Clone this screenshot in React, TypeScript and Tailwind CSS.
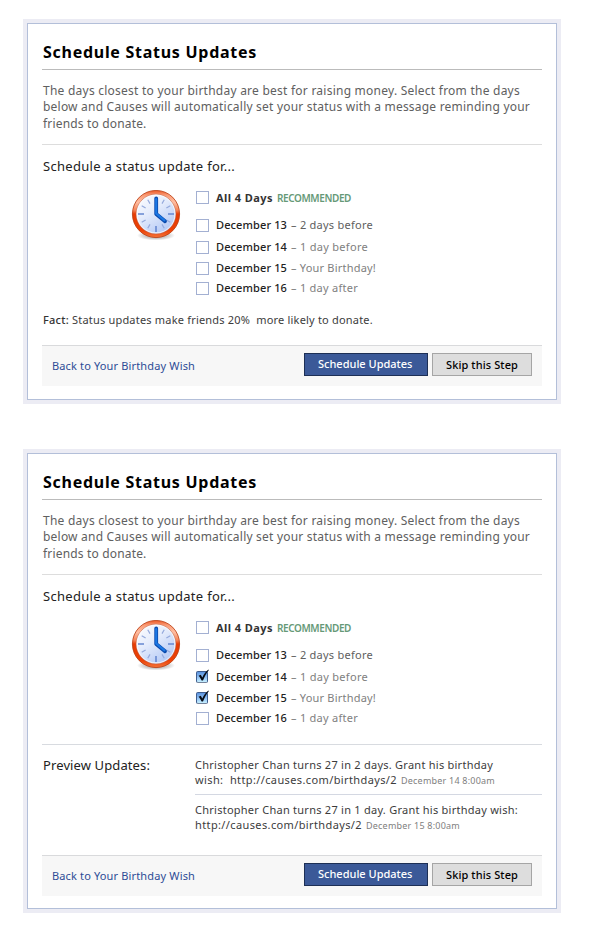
import type { ReactNode } from "react";

function Clock({ id }: { id: string }) {
  const ticks = [30, 60, 120, 150, 210, 240, 300, 330];
  return (
    <svg className="block h-[54px] w-[52px]" viewBox="0 0 52 54">
      <defs>
        <linearGradient id={`${id}-rim`} x1="0" y1="0" x2="0" y2="1">
          <stop offset="0" stopColor="#ec5a28" />
          <stop offset="0.1" stopColor="#fb9a74" />
          <stop offset="0.25" stopColor="#ffbea2" />
          <stop offset="0.42" stopColor="#f58458" />
          <stop offset="0.5" stopColor="#e63c04" />
          <stop offset="0.85" stopColor="#ec4206" />
          <stop offset="1" stopColor="#f4753c" />
        </linearGradient>
        <linearGradient id={`${id}-face`} x1="0" y1="0" x2="0.7" y2="1">
          <stop offset="0" stopColor="#ffffff" />
          <stop offset="0.45" stopColor="#e6edfc" />
          <stop offset="1" stopColor="#b3c8f5" />
        </linearGradient>
        <radialGradient id={`${id}-shadow`}>
          <stop offset="0" stopColor="#000" stopOpacity="0.35" />
          <stop offset="0.6" stopColor="#000" stopOpacity="0.2" />
          <stop offset="1" stopColor="#000" stopOpacity="0" />
        </radialGradient>
      </defs>
      <ellipse cx="26" cy="45.5" rx="19" ry="5" fill={`url(#${id}-shadow)`} />
      <circle cx="26" cy="24" r="23.6" fill={`url(#${id}-rim)`} stroke="#b8380c" strokeWidth="0.8" />
      <circle cx="26" cy="24" r="19.8" fill={`url(#${id}-face)`} stroke="#c06a50" strokeWidth="0.6" />
      <circle cx="26" cy="24" r="19" fill="none" stroke="#fff" strokeOpacity="0.8" strokeWidth="1" />
      {ticks.map((a) => (
        <path key={a} d="M26 7.5V12" stroke="#94a9dc" strokeWidth="1.2" transform={`rotate(${a} 26 24)`} />
      ))}
      <path d="M8 24H14M38 24H44M26 36V42" stroke="#6688d0" strokeWidth="1.6" />
      <path d="M26.2 8.3V24L35 31.2" fill="none" stroke="#0b4aae" strokeWidth="3.8" strokeLinecap="round" strokeLinejoin="round" />
      <path d="M26.2 9V23.5L34.4 30.4" fill="none" stroke="#1b78e4" strokeWidth="2.1" strokeLinecap="round" />
    </svg>
  );
}

function Checkbox({ checked }: { checked?: boolean }) {
  if (!checked) return <span className="block size-[13px] shrink-0 border border-[#a3b0d2] bg-white" />;
  return (
    <span className="relative mr-px block size-3 shrink-0 rounded-[2px] border border-[#3d5c8e] border-b-[#74839c] bg-linear-to-b from-[#5b93de] via-[#8dbdf2] to-[#c6f0ff]">
      <svg className="absolute -top-[3px] -left-px h-[15px] w-[14px]" viewBox="0 0 14 15">
        <path d="M2.6 6.8 L4.8 5.8 L6.3 8.6 C7.6 5.6 9.6 2.6 12.4 0.6 L12.8 1.2 C10.3 4 8.6 7.4 7 11.6 L5.6 11.6 C4.8 9.8 3.8 8 2.6 6.8 Z" fill="#050b16" />
      </svg>
    </span>
  );
}

function Option({ height, checked, children }: { height: string; checked?: boolean; children: ReactNode }) {
  return (
    <li className={`flex items-start gap-[7px] ${height}`}>
      <Checkbox checked={checked} />
      <span className="flex gap-1 text-[11px] whitespace-nowrap">{children}</span>
    </li>
  );
}

function Day({ date, note }: { date: string; note: ReactNode }) {
  return (
    <>
      <span className="w-[71px] leading-[11px] font-medium tracking-[0.116px] text-[#222]">{date}</span>
      <span className="leading-[11px]">{note}</span>
    </>
  );
}

interface PanelProps {
  id: string;
  selected?: boolean;
  children: ReactNode;
}

function Panel({ id, selected, children }: PanelProps) {
  return (
    <section className="w-[538px] bg-[#ececf4] p-1">
      <div className={`border border-[#b3bfd9] bg-white px-[14px] ${selected ? "pb-3" : "pb-[13px]"}`}>
        <h2 className="h-[46px] border-b border-[#bbb] pt-[18px] pl-px text-[16px] leading-5 font-bold tracking-[0.724px] text-black">
          Schedule Status Updates
        </h2>
        <p className="h-[75px] border-b border-[#ddd] pt-[13px] pl-px text-[12px] whitespace-nowrap text-[#606060]">
          <span className="block h-4 leading-4 tracking-[0.239px]">The days closest to your birthday are best for raising money. Select from the days</span>
          <span className="block h-[17px] leading-4 tracking-[0.212px]">below and Causes will automatically set your status with a message reminding your</span>
          <span className="block h-4 leading-4 tracking-[0.17px]">friends to donate.</span>
        </p>
        <h3 className="pt-[11px] pl-px text-[13px] leading-5 tracking-[0.295px] text-[#222]">Schedule a status update for...</h3>
        <div className="flex h-[119px] pl-[88px]">
          <div className="w-[66px] pt-[14px]">
            <Clock id={id} />
          </div>
          <ul className="pt-[15px]">
            <Option height="h-7">
              <span className="w-[57px] leading-[13px] font-bold tracking-[0.438px] text-[#333]">All 4 Days</span>
              <span className="text-[10px] leading-[15px] font-semibold tracking-[-0.398px] text-[#669977]">RECOMMENDED</span>
            </Option>
            <Option height="h-[22px]">
              <Day date="December 13" note={<span className="tracking-[0.258px] text-[#606060]">– 2 days before</span>} />
            </Option>
            <Option height="h-[21px]" checked={selected}>
              <Day date="December 14" note={<span className="tracking-[0.296px] text-[#808080]">– 1 day before</span>} />
            </Option>
            <Option height="h-5" checked={selected}>
              <Day date="December 15" note={<span className="tracking-[0.206px] text-[#808080]">– Your Birthday!</span>} />
            </Option>
            <Option height="h-[13px]">
              <Day date="December 16" note={<span className="tracking-[0.262px] text-[#808080]">– 1 day after</span>} />
            </Option>
          </ul>
        </div>
        {children}
        <footer className="flex h-[41px] items-start border-t border-[#d9dadc] bg-[#f7f7f7] pt-[7px] pr-[10px] pl-[10px] text-[11px] whitespace-nowrap">
          <a className="pt-[5px] leading-4 tracking-[0.146px] text-[#2d4c96]">Back to Your Birthday Wish</a>
          <button className="ml-auto flex h-[23px] w-[124px] border border-[#1d2f55] bg-[#3b5998] pt-[2px] pl-[13px] leading-4 font-medium text-white">
            Schedule Updates
          </button>
          <button className="ml-1 flex h-[23px] w-[100px] justify-center border border-[#a5a5a5] bg-[#dddddd] pt-[3px] leading-4 font-medium tracking-[0.104px] text-black">
            Skip this Step
          </button>
        </footer>
      </div>
    </section>
  );
}

export default function App() {
  return (
    <main className="flex h-[950px] w-[595px] flex-col gap-[45px] bg-white pt-[19px] pl-[23px] font-['Noto_Sans','Open_Sans',sans-serif]">
      <Panel id="empty">
        <p className="flex h-[50px] gap-[3px] pt-[17px] pl-px text-[11px] leading-4 whitespace-nowrap text-[#3c3c3c]">
          <span className="w-[26px] font-medium tracking-[0.256px] text-[#333]">Fact:</span>
          <span className="tracking-[0.195px]">Status updates make friends 20%&nbsp; more likely to donate.</span>
        </p>
      </Panel>
      <Panel id="chosen" selected>
        <div className="mt-[19px] flex h-[111px] border-t border-[#d8dbe0] pl-px">
          <h3 className="w-[152px] pt-[10px] text-[13px] leading-5 tracking-[0.112px] text-[#222]">Preview Updates:</h3>
          <div className="w-[347px] pt-3 text-[11px] leading-[15px] whitespace-nowrap text-[#3c3c3c]">
            <div className="h-[38px] border-b border-[#d4d8e2]">
              <p className="h-[15px] tracking-[0.253px]">Christopher Chan turns 27 in 2 days. Grant his birthday</p>
              <p className="flex h-[15px] gap-1">
                <span className="w-[202px] tracking-[0.382px]">wish:&nbsp; http://causes.com/birthdays/2</span>
                <span className="text-[9px] leading-[17px] tracking-[0.217px] text-[#808080]">December 14 8:00am</span>
              </p>
            </div>
            <div className="pt-[7px]">
              <p className="h-[15px] tracking-[0.254px]">Christopher Chan turns 27 in 1 day. Grant his birthday wish:</p>
              <p className="flex h-[15px] gap-1">
                <span className="w-[167px] tracking-[0.379px]">http://causes.com/birthdays/2</span>
                <span className="text-[9px] leading-[17px] tracking-[0.217px] text-[#808080]">December 15 8:00am</span>
              </p>
            </div>
          </div>
        </div>
      </Panel>
    </main>
  );
}
